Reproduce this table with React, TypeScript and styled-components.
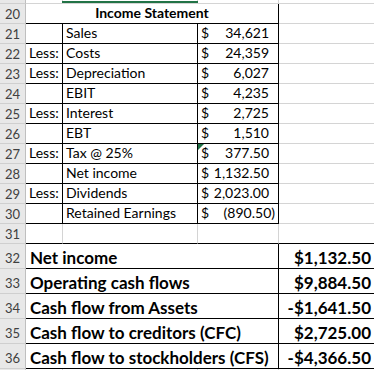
import React from "react";
import styled, { createGlobalStyle } from "styled-components";

const GlobalStyle = createGlobalStyle`
  body {
    margin: 0;
    background: #ffffff;
  }
`;

const GRID = "#d4d4d4";
const BLACK = "#000000";

type Edge = "grid" | "black" | "none";

const edge = (e: Edge) =>
  e === "black" ? `1px solid ${BLACK}` : e === "grid" ? `1px solid ${GRID}` : "1px solid transparent";

const Sheet = styled.div`
  display: grid;
  grid-template-columns: 26px 37px 135px 81px 96px;
  grid-template-rows: 4px repeat(12, 20px) repeat(5, 25px) 10px;
  width: 374px;
  height: 370px;
  overflow: hidden;
  font-family: Lato, "Liberation Sans", sans-serif;
  color: #000;
`;

const RowHead = styled.div`
  box-sizing: border-box;
  background: #e8e8e8;
  border-right: 1px solid #bfbfbf;
  border-bottom: 1px solid #cfcfcf;
  color: #404040;
  font-size: 13px;
  display: flex;
  align-items: flex-end;
  justify-content: center;
  padding-bottom: ${({ $tall }: { $tall?: boolean }) => ($tall ? "3px" : "2px")};
  line-height: 1;
`;

interface CellProps {
  $right?: Edge;
  $bottom?: Edge;
  $span?: number;
  $align?: "left" | "center" | "right";
  $big?: boolean;
  $bold?: boolean;
}

const Cell = styled.div<CellProps>`
  position: relative;
  box-sizing: border-box;
  grid-column: span ${({ $span }) => $span ?? 1};
  border-right: ${({ $right }) => edge($right ?? "grid")};
  border-bottom: ${({ $bottom }) => edge($bottom ?? "grid")};
  display: flex;
  align-items: flex-end;
  justify-content: ${({ $align }) =>
    $align === "center" ? "center" : $align === "right" ? "flex-end" : "flex-start"};
  padding: ${({ $big }) => ($big ? "0 3px 2px 4px" : "0 3px 3px 3px")};
  font-size: ${({ $big }) => ($big ? "17px" : "14px")};
  font-weight: ${({ $bold }) => ($bold ? 700 : 400)};
  line-height: 1;
  white-space: nowrap;
`;

const TopCell = styled.div<{ $selected?: boolean }>`
  box-sizing: border-box;
  border-right: 1px solid ${GRID};
  border-bottom: 1px solid ${GRID};
  position: relative;
  &::after {
    content: "";
    display: ${({ $selected }) => ($selected ? "block" : "none")};
    position: absolute;
    left: -1px;
    right: -1px;
    top: 1px;
    height: 2px;
    background: #217346;
  }
`;

const Money = styled.div`
  display: flex;
  justify-content: space-between;
  width: 100%;
`;

const Amount = styled.span<{ $neg?: boolean }>`
  padding-right: ${({ $neg }) => ($neg ? "0" : "6px")};
`;

const ErrorMark = styled.span`
  position: absolute;
  left: 0;
  top: 0;
  width: 0;
  height: 0;
  border-top: 6px solid #1e7145;
  border-right: 6px solid transparent;
`;

interface StatementRow {
  n: number;
  less?: boolean;
  label: string;
  amount: string;
  neg?: boolean;
  flag?: boolean;
}

const statement: StatementRow[] = [
  { n: 21, label: "Sales", amount: "34,621" },
  { n: 22, less: true, label: "Costs", amount: "24,359" },
  { n: 23, less: true, label: "Depreciation", amount: "6,027" },
  { n: 24, label: "EBIT", amount: "4,235" },
  { n: 25, less: true, label: "Interest", amount: "2,725" },
  { n: 26, label: "EBT", amount: "1,510" },
  { n: 27, less: true, label: "Tax @ 25%", amount: "377.50", flag: true },
  { n: 28, label: "Net income", amount: "1,132.50" },
  { n: 29, less: true, label: "Dividends", amount: "2,023.00" },
  { n: 30, label: "Retained Earnings", amount: "(890.50)", neg: true },
];

const summary = [
  { n: 32, label: "Net income", value: "$1,132.50" },
  { n: 33, label: "Operating cash flows", value: "$9,884.50" },
  { n: 34, label: "Cash flow from Assets", value: "-$1,641.50" },
  { n: 35, label: "Cash flow to creditors (CFC)", value: "$2,725.00" },
  { n: 36, label: "Cash flow to stockholders (CFS)", value: "-$4,366.50" },
];

const App = () => {
  return (
    <>
      <GlobalStyle />
      <Sheet>
        {/* row 19, mostly scrolled off */}
        <RowHead />
        <TopCell />
        <TopCell $selected />
        <TopCell />
        <TopCell />

        <RowHead>20</RowHead>
        <Cell $span={3} $align="center" $bold $right="black" $bottom="black">
          Income Statement
        </Cell>
        <Cell />

        {statement.map((row) => (
          <React.Fragment key={row.n}>
            <RowHead>{row.n}</RowHead>
            <Cell $right="black" $bottom="black">
              {row.less ? "Less:" : ""}
            </Cell>
            <Cell $right="black" $bottom="black">
              {row.label}
            </Cell>
            <Cell $right="black" $bottom="black">
              {row.flag && <ErrorMark />}
              <Money>
                <span>$</span>
                <Amount $neg={row.neg}>{row.amount}</Amount>
              </Money>
            </Cell>
            <Cell />
          </React.Fragment>
        ))}

        <RowHead>31</RowHead>
        <Cell $bottom="black" />
        <Cell $bottom="black" />
        <Cell $bottom="black" />
        <Cell $bottom="black" $right="none" />

        {summary.map((row) => (
          <React.Fragment key={row.n}>
            <RowHead $tall>{row.n}</RowHead>
            <Cell $span={3} $big $bold $right="black" $bottom="black">
              {row.label}
            </Cell>
            <Cell $big $bold $align="right" $right="none" $bottom="black">
              {row.value}
            </Cell>
          </React.Fragment>
        ))}

        {/* row 37, only its top edge is in view */}
        <RowHead />
        <Cell />
        <Cell />
        <Cell />
        <Cell $right="none" />
      </Sheet>
    </>
  );
};

export default App;
